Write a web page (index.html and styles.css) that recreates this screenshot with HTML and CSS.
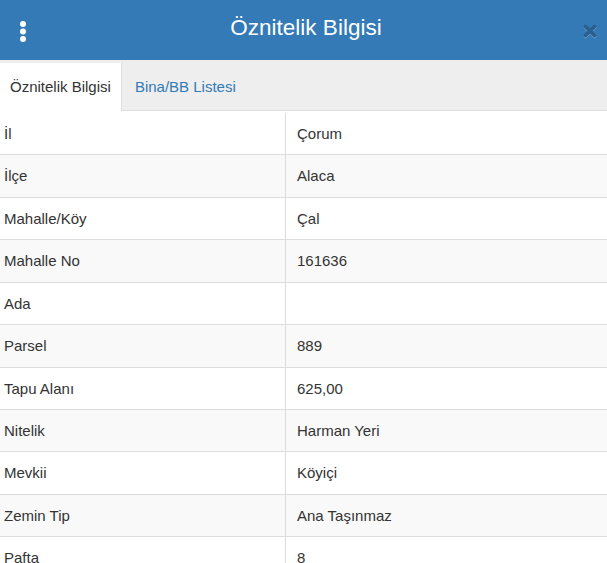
FILE: index.html
```html
<!DOCTYPE html>
<html lang="tr">
<head>
<meta charset="utf-8">
<title>Öznitelik Bilgisi</title>
<link rel="stylesheet" href="styles.css">
</head>
<body>
<div class="panel">
  <header class="header">
    <span class="menu" aria-label="menu">
      <svg width="8" height="24" viewBox="0 0 8 24"><circle cx="4" cy="4" r="3" fill="#fff"/><circle cx="4" cy="11.5" r="3" fill="#fff"/><circle cx="4" cy="19" r="3" fill="#fff"/></svg>
    </span>
    <h1 class="title">Öznitelik Bilgisi</h1>
    <span class="close" aria-label="kapat">
      <svg width="14" height="14" viewBox="0 0 14 14"><path d="M2.5 2.5 L11.5 11.5 M11.5 2.5 L2.5 11.5" stroke="#2b5f8f" stroke-width="3.6" stroke-linecap="round"/></svg>
    </span>
  </header>
  <nav class="tabs">
    <a class="tab active">Öznitelik Bilgisi</a>
    <a class="tab">Bina/BB Listesi</a>
  </nav>
  <table class="attrs">
    <tbody>
      <tr><td class="k">İl</td><td class="v">Çorum</td></tr>
      <tr><td class="k">İlçe</td><td class="v">Alaca</td></tr>
      <tr><td class="k">Mahalle/Köy</td><td class="v">Çal</td></tr>
      <tr><td class="k">Mahalle No</td><td class="v">161636</td></tr>
      <tr><td class="k">Ada</td><td class="v"></td></tr>
      <tr><td class="k">Parsel</td><td class="v">889</td></tr>
      <tr><td class="k">Tapu Alanı</td><td class="v">625,00</td></tr>
      <tr><td class="k">Nitelik</td><td class="v">Harman Yeri</td></tr>
      <tr><td class="k">Mevkii</td><td class="v">Köyiçi</td></tr>
      <tr><td class="k">Zemin Tip</td><td class="v">Ana Taşınmaz</td></tr>
      <tr><td class="k">Pafta</td><td class="v">8</td></tr>
    </tbody>
  </table>
</div>
</body>
</html>
```
FILE: styles.css
```css
html, body {
  margin: 0;
  padding: 0;
  background: #fff;
  overflow: hidden;
}
body {
  font-family: "Liberation Sans", Arial, sans-serif;
  font-size: 15px;
  line-height: 1.42857;
  color: #333;
}
.header {
  height: 60px;
  background: #337ab7;
  display: flex;
  align-items: center;
  justify-content: space-between;
  padding: 0 10px 0 19px;
}
.menu {
  display: flex;
  width: 8px;
  height: 24px;
  margin-top: 3px;
}
.title {
  margin: 0;
  font-size: 22.5px;
  font-weight: normal;
  color: #fff;
  flex: 1;
  text-align: center;
  line-height: 1;
  margin-top: -3px;
  padding-left: 2px;
}
.close {
  display: flex;
  width: 14px;
  height: 14px;
  margin-top: 1px;
  filter: drop-shadow(0 1px 0 rgba(255,255,255,0.25));
}
.tabs {
  display: flex;
  align-items: flex-end;
  gap: 3px;
  height: 51px;
  background: #eee;
  border-bottom: 1px solid #ddd;
  box-sizing: border-box;
}
.tab {
  padding: 13px 10px 13px 10px;
  color: #337ab7;
  cursor: pointer;
}
.tab.active {
  background: #fff;
  color: #333;
  border-right: 1px solid #ddd;
  margin-bottom: -1px;
  padding-bottom: 14px;
}
.attrs {
  width: 100%;
  border-collapse: collapse;
  margin-top: 2px;
}
.attrs td {
  border-top: 1px solid #ddd;
  padding: 10px 11px;
  vertical-align: top;
  height: 21px;
}
.attrs tr:first-child td {
  border-top: 0;
}
.attrs tr:nth-child(even) td {
  background: #f9f9f9;
}
.attrs td.k {
  width: 275px;
  padding-left: 4px;
  padding-right: 6px;
  border-right: 1px solid #ddd;
}
```
